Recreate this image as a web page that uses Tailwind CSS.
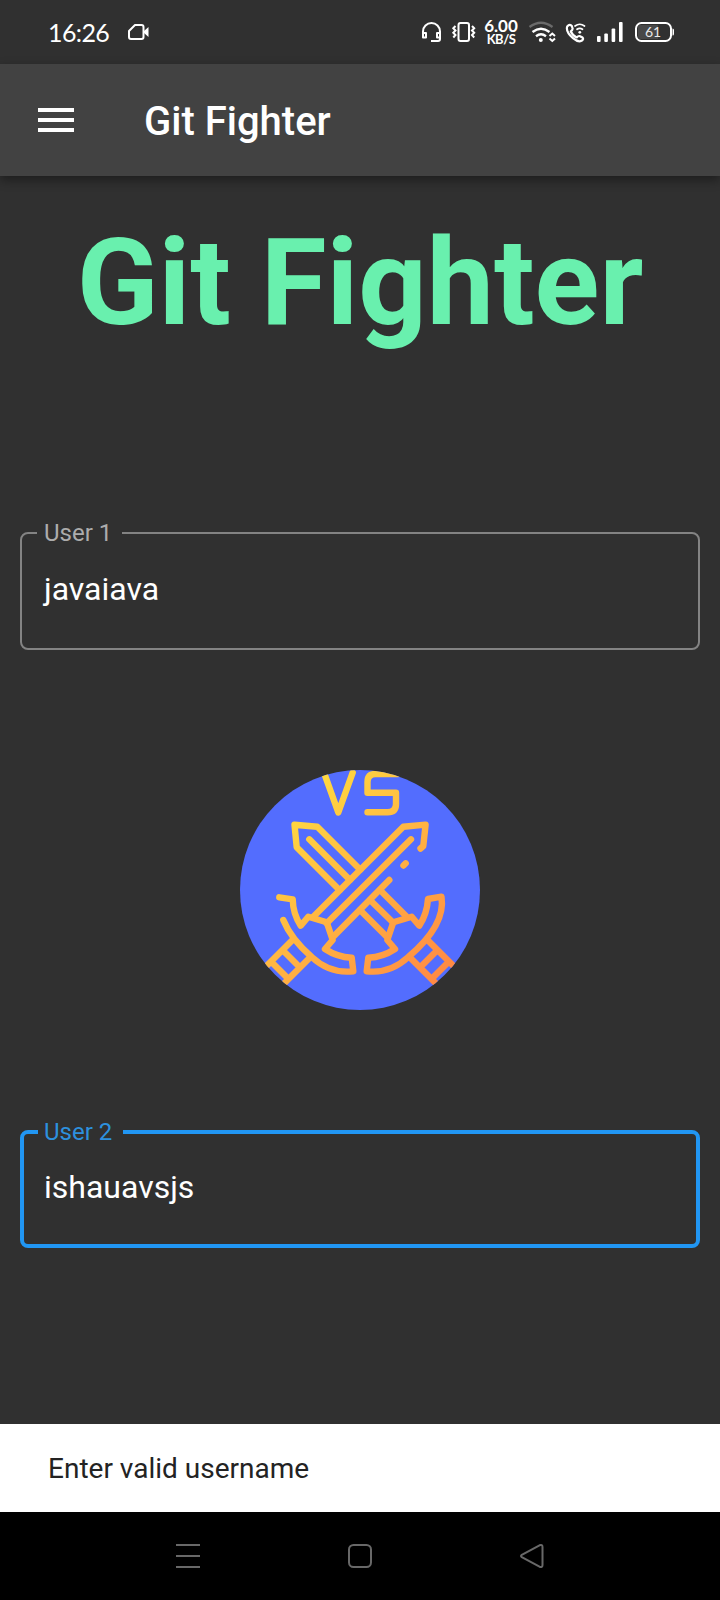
<!DOCTYPE html>
<html lang="en">
<head>
<meta charset="utf-8">
<title>Git Fighter</title>
<script src="https://cdn.jsdelivr.net/npm/@tailwindcss/browser@4"></script>
</head>
<body class="w-[720px] h-[1600px] bg-[#303030] overflow-hidden flex flex-col font-['Roboto',sans-serif] text-white">
  <!-- Status bar -->
  <div class="h-16 shrink-0 flex items-center pl-12">
    <span class="w-[62px] whitespace-nowrap font-['Lato',sans-serif] text-[25px] leading-8 tracking-[-0.6px]">16:26</span>
    <svg class="ml-[17px]" width="24" height="64" viewBox="127 0 24 64" fill="none">
      <path d="M135 25H141.500Q143.500 25 143.500 27V37Q143.500 39 141.500 39H131Q129 39 129 37V31Z" stroke="#fff" stroke-width="2" stroke-linejoin="round"/>
      <path d="M144 31L148.500 27V37L144 33Z" fill="#fff"/>
    </svg>
    <svg class="ml-[270px]" width="21" height="64" viewBox="421 0 21 64" fill="none" stroke="#fff" stroke-width="2">
      <path d="M423 37V31.500a8.500 8.500 0 0 1 17 0V39Q440 41 438 41H431"/>
      <path d="M423 33H426V37.500H423ZM440 33H437V37.500H440Z" stroke-linejoin="round"/>
    </svg>
    <svg class="ml-[9px]" width="26" height="64" viewBox="451 0 26 64" fill="none" stroke="#fff" stroke-width="2">
      <rect x="458.500" y="23" width="10.500" height="18" rx="2"/>
      <path d="M455.500 26L453.300 28.300L455.500 30.500L453.300 32.800L455.500 35L453.300 37.500M472 26L474.200 28.300L472 30.500L474.200 32.800L472 35L474.200 37.500" stroke-width="2"/>
    </svg>
    <div class="ml-[6px] w-9 flex flex-col items-center whitespace-nowrap font-['Lato',sans-serif] font-bold">
      <span class="text-[17px] leading-[14px]">6.00</span>
      <span class="text-[13px] leading-[12px] tracking-[-0.5px]">KB/S</span>
    </div>
    <svg class="ml-[9px]" width="28" height="64" viewBox="529 0 28 64" fill="none" stroke="#fff" stroke-width="2.400">
      <path d="M530.500 27Q542 18.500 553.500 27" stroke="#6a6a6a"/>
      <path d="M533.500 32Q542 25.500 550.500 32M537 36.200Q542 32.500 547 36.200"/>
      <circle cx="541.800" cy="40" r="2" fill="#fff" stroke="none"/>
      <path d="M550.500 36L553.300 33.500L556 36M550.500 38.500L553.300 41L556 38.500" stroke-width="2"/>
    </svg>
    <svg class="ml-[9px]" width="21" height="64" viewBox="566 0 21 64" fill="none" stroke="#fff" stroke-width="2.200" stroke-linecap="round" stroke-linejoin="round">
      <path d="M568.200 26.500Q571 23.500 572.800 26L573.600 28.500Q573.800 30 571.800 31.500Q573.500 35.500 577.700 37.500Q579.500 35.500 581 36.200L583.500 37.500Q585 39 582.500 40.800Q579 42.500 574 38.200Q566.500 31.500 568.200 26.500Z"/>
      <path d="M576 26Q580.800 22.500 585.500 26M578 29.300Q580.800 27.300 583.500 29.300" stroke-width="1.700"/>
      <circle cx="580.800" cy="32.300" r="1.400" fill="#fff" stroke="none"/>
    </svg>
    <svg class="ml-[10px]" width="28" height="64" viewBox="597 0 28 64" fill="#fff">
      <rect x="598" y="36" width="3.600" height="6" rx="1"/><rect x="605.300" y="33.500" width="3.600" height="8.500" rx="1"/><rect x="612.600" y="28.500" width="3.600" height="13.500" rx="1"/><rect x="620" y="22" width="3.600" height="20" rx="1"/>
    </svg>
    <svg class="ml-[11px]" width="40" height="64" viewBox="635 0 40 64" fill="none">
      <path d="M638 26.500Q638 25 640 25H658V39H641Q638 39 638 36Z" fill="#484848"/>
      <rect x="636" y="23" width="35" height="18" rx="5.500" stroke="#fff" stroke-width="2"/>
      <path d="M672.500 28.500Q674 28.500 674 30V34Q674 35.500 672.500 35.500Z" fill="#fff"/>
      <text x="653" y="37" text-anchor="middle" font-family="Lato" font-size="14" fill="#e8e8e8">61</text>
    </svg>
  </div>

  <!-- App bar -->
  <header class="h-28 shrink-0 bg-[#424242] flex items-center pl-[38px] shadow-[0_4px_10px_rgba(0,0,0,0.4)]">
    <div class="flex flex-col gap-[6px] w-9">
      <div class="h-1 bg-white"></div><div class="h-1 bg-white"></div><div class="h-1 bg-white"></div>
    </div>
    <span class="ml-[70px] pt-1 text-[40px] leading-[48px] font-medium whitespace-nowrap">Git Fighter</span>
  </header>

  <main class="flex-1 flex flex-col px-5">
    <h1 class="mt-[37px] -mx-5 text-center text-[120px] leading-[140px] font-bold text-[#69f0ae] whitespace-nowrap">Git Fighter</h1>

    <fieldset class="relative mt-[179px] h-[118px] rounded-lg border-2 border-[#838383] px-[22px] pt-[37px]">
      <span class="absolute left-[15px] -top-[15px] w-[85px] pl-[7px] bg-[#303030] text-2xl leading-7 text-[#acacac]">User 1</span>
      <span class="block text-[32px] leading-[36px]">javaiava</span>
    </fieldset>

    <div class="mt-[120px] size-60 self-center rounded-full overflow-hidden bg-[#536dfe]">
      <svg width="240" height="240" viewBox="240 770 240 240" fill="none">
        <defs>
          <linearGradient id="gold" gradientUnits="userSpaceOnUse" x1="295" y1="810" x2="455" y2="970">
            <stop offset="0" stop-color="#ffd740"/><stop offset="1" stop-color="#ff8844"/>
          </linearGradient>
        </defs>
        <g stroke="url(#gold)" stroke-width="6.400" stroke-linecap="round" stroke-linejoin="round">
          <path d="M324 772.700L338.300 812.500L352.700 772.700"/>
          <path d="M398 774H375.500Q367.500 774 367.500 782V792.700H396V804Q396 812.300 387.500 812.300H367.500"/>
          <path d="M339.700 890.300L296.700 847.300L294.500 824.800L317.300 826.700L360.300 869.700M309.300 839.300L350 880"/>
          <path d="M313.300 916.700L403.300 826.700L425.600 824.600L423.300 846L420.500 848.500M411 839.300L326.700 923.300M403.500 865.500L405.700 863.300M389.300 880L334 936"/>
          <path d="M380 890L406 916M370 900L393.300 922.700M360 910L387.500 937.500"/>
          <path d="M279.300 897.300L292.700 899.300Q293 914 300.700 925.700L308.300 916.700L326.700 922.300L332.700 940L325 949Q337 957 351.700 957.700L353.300 971.200Q330 974 311.700 957Q291 939 283.300 920"/>
          <path d="M441.500 896.700L428 899Q427 914 419.300 925.700L411.700 916.700L393.300 922.300L387.300 940L395 949Q383 957 368.300 957.700L366.700 971.200Q390 974 408.300 957Q446 925 441.500 896.700Z"/>
          <path d="M293 939.500L258 974.500M310 957.500L277 990.500M282.500 950L300 967.500M271 961.500L288.500 979"/>
          <path d="M427 939.500L462 974.500M410 957.500L443 990.500M437.500 950L420 967.500M449 961.500L431.500 979"/>
        </g>
      </svg>
    </div>

    <fieldset class="relative mt-[120px] h-[118px] rounded-lg border-4 border-[#2196f3] px-5 pt-[35px]">
      <span class="absolute left-[14px] -top-4 w-[85px] pl-[6px] bg-[#303030] text-2xl leading-7 text-[#2d90de]">User 2</span>
      <span class="block text-[32px] leading-[36px]">ishauavsjs</span>
    </fieldset>
  </main>

  <!-- Snackbar -->
  <div class="h-[88px] shrink-0 bg-white flex items-center pl-12 pt-[2px] text-[28px] text-[#232323]">Enter valid username</div>

  <!-- System navigation -->
  <nav class="h-[88px] shrink-0 bg-black flex items-center justify-between px-44">
    <svg width="24" height="24" stroke="#686868" stroke-width="2"><path d="M0 1H24M0 12H24M0 23H24"/></svg>
    <svg width="24" height="24" fill="none" stroke="#686868" stroke-width="2"><rect x="1" y="1" width="22" height="22" rx="4.500"/></svg>
    <svg width="24" height="24" fill="none" stroke="#686868" stroke-width="2" stroke-linejoin="round"><path d="M1.800 10.800L19.500 1.300Q22.500 .3 22.500 3V21Q22.500 23.700 19.500 22.700L1.800 13.200Q.2 12 1.800 10.800Z"/></svg>
  </nav>
</body>
</html>
